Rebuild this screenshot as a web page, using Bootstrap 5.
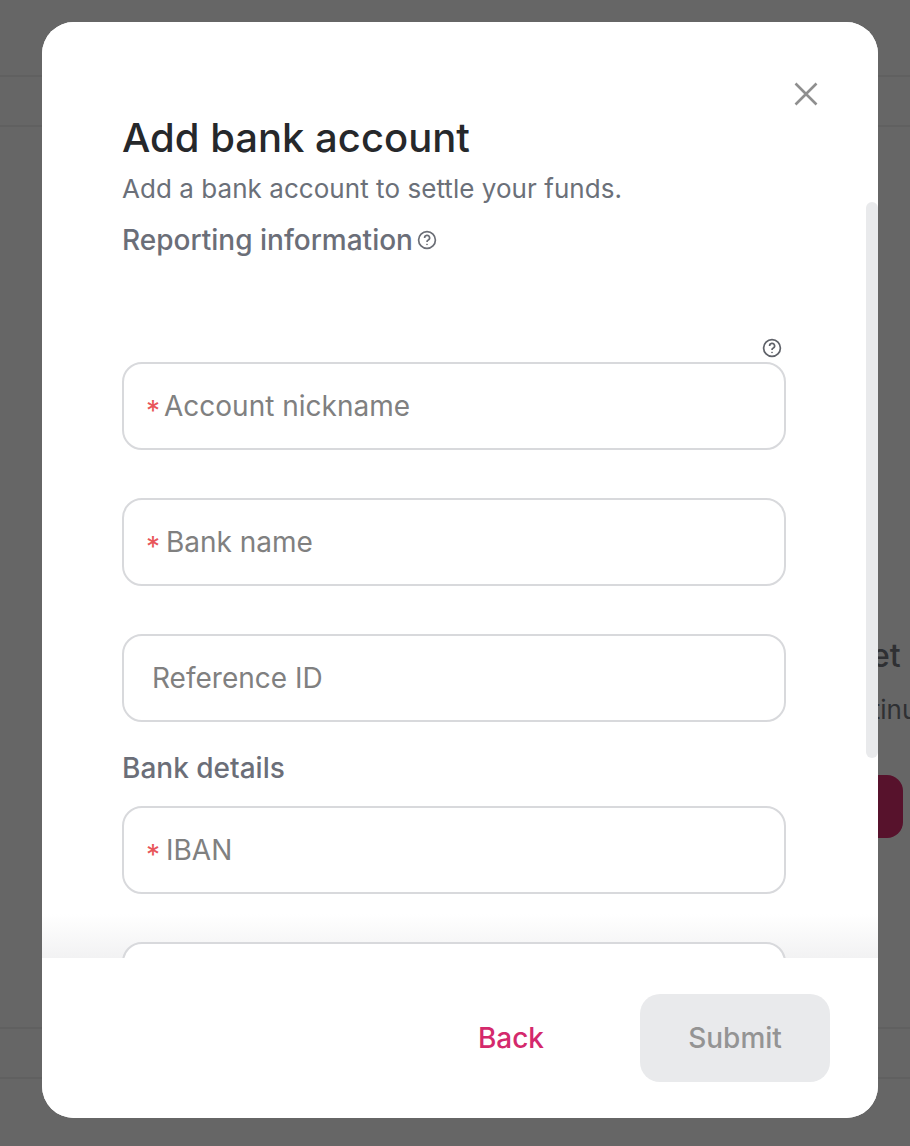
<!doctype html>
<html lang="en">
<head>
<meta charset="utf-8">
<title>Add bank account</title>
<link href="https://cdn.jsdelivr.net/npm/bootstrap@5.3.0/dist/css/bootstrap.min.css" rel="stylesheet">
<style>
html,body{height:100%;overflow:hidden}
body{font-family:Inter,"Liberation Sans",sans-serif;background:#fff;color:#2b2d33}
.bk-page{height:1146px;overflow:hidden}
.bk-strip{height:52px;margin-top:75px;border-top:2px solid #f0f0f0;border-bottom:2px solid #f0f0f0}
.bk-strip-low{margin-top:0}
.bk-main{height:900px;padding-top:509px}
.bk-get{margin:0 0 0 847px;font-size:32px;font-weight:500;line-height:40px;white-space:nowrap;color:#75787f}
.bk-cont{margin:19px 0 0 826px;font-size:26px;line-height:30px;white-space:nowrap;color:#75787f}
.bk-cta{display:block;width:203px;height:63px;margin:50px 0 0 700px;background:#d92d6e;border-radius:16px}
.modal-backdrop.bk-scrim{opacity:.6}
.bk-dialog{width:836px;max-width:836px;margin:22px 0 0 42px;position:relative}
.bk-content{height:1096px;border:0;border-radius:32px;overflow:hidden;background:#fff}
.bk-scroll{height:936px;padding:0 92px 0 80px;overflow:hidden;flex:none;background:linear-gradient(#fff,#f2f2f3) bottom/100% 44px no-repeat #fff}
.bk-title{margin:94px 0 0;font-size:40px;font-weight:500;line-height:44px;color:#26282b}
.bk-sub{margin:13px 0 0;font-size:26px;line-height:32px;color:#6b7079;letter-spacing:.05px}
.bk-secrow{margin-top:17px}
.bk-section{margin:0;font-size:28px;font-weight:500;line-height:36px;color:#6b6e78}
.bk-sec2{margin:28px 0 20px}
.bk-field{position:relative}
.bk-field .form-control{height:88px;border:2px solid #d8d9dc;border-radius:20px;padding:0 28px;font-size:28px;color:#333;background:#fff}
.bk-field .form-control::placeholder{color:#808080;opacity:1}
.bk-field .bk-req{padding-left:42px}
.bk-field .bk-req-tight{padding-left:40px}
.bk-star{position:absolute;left:24px;top:31px;color:#e8555a;font-size:28px;line-height:36px}
.bk-help{flex:none;display:block}
.bk-helprow{padding:80px 4px 4px 0}
.bk-close{position:absolute;top:60px;right:60px;z-index:2;width:24px;height:24px;padding:0;border:0;background:none;line-height:0}
.bk-bar{position:absolute;right:0;top:180px;width:12px;height:556px;background:#e9eaec;border-radius:6px}
.bk-foot{height:160px;flex:none;padding:36px 48px 36px 0;border:0;background:#fff}
.modal-footer .bk-back,.modal-footer .bk-submit{height:88px;font-size:28px;font-weight:500;border:0;border-radius:20px;padding:0;margin:0}
.modal-footer .bk-back{color:#d4296c;background:none;margin-right:96px}
.bk-submit{width:190px}
.btn.bk-submit:disabled{background:#e9eaec;color:#949494;opacity:1}
</style>
</head>
<body>
<div class="bk-page">
  <div class="bk-strip"></div>
  <div class="bk-main">
    <div class="bk-get">Get</div>
    <div class="bk-cont">continue</div>
    <span class="bk-cta"></span>
  </div>
  <div class="bk-strip bk-strip-low"></div>
</div>
<div class="modal-backdrop show bk-scrim"></div>
<div class="modal d-block" tabindex="-1">
  <div class="modal-dialog bk-dialog">
    <div class="modal-content bk-content">
      <button type="button" class="bk-close" aria-label="Close">
        <svg width="24" height="24" viewBox="0 0 24 24" fill="none" stroke="#8f8f8f" stroke-width="2.6"><path d="M1.5 1.5 22.5 22.5M22.5 1.5 1.5 22.5"/></svg>
      </button>
      <div class="modal-body bk-scroll d-block">
        <h1 class="bk-title">Add bank account</h1>
        <p class="bk-sub">Add a bank account to settle your funds.</p>
        <div class="d-flex align-items-center gap-1 bk-secrow">
          <h2 class="bk-section">Reporting information</h2>
          <svg class="bk-help" width="20" height="20" viewBox="0 0 20 20" fill="none" stroke="#6b6e76" stroke-width="1.7"><circle cx="10" cy="10" r="8.4"/><path d="M7.6 7.9a2.5 2.5 0 1 1 3.7 2.2c-.8.4-1.3.9-1.3 1.8"/><circle cx="10" cy="14.4" r=".5" fill="#6b6e76" stroke-width=".7"/></svg>
        </div>
        <div class="d-flex justify-content-end bk-helprow">
          <svg class="bk-help" width="20" height="20" viewBox="0 0 20 20" fill="none" stroke="#5f6269" stroke-width="1.7"><circle cx="10" cy="10" r="8.4"/><path d="M7.6 7.9a2.5 2.5 0 1 1 3.7 2.2c-.8.4-1.3.9-1.3 1.8"/><circle cx="10" cy="14.4" r=".5" fill="#5f6269" stroke-width=".7"/></svg>
        </div>
        <div class="bk-field"><span class="bk-star">*</span><input class="form-control bk-req-tight" type="text" placeholder="Account nickname"></div>
        <div class="bk-field mt-5"><span class="bk-star">*</span><input class="form-control bk-req" type="text" placeholder="Bank name"></div>
        <div class="bk-field mt-5"><input class="form-control" type="text" placeholder="Reference ID"></div>
        <h2 class="bk-section bk-sec2">Bank details</h2>
        <div class="bk-field"><span class="bk-star">*</span><input class="form-control bk-req" type="text" placeholder="IBAN"></div>
        <div class="bk-field mt-5"><input class="form-control" type="text" aria-label="More details"></div>
      </div>
      <div class="bk-bar"></div>
      <div class="modal-footer bk-foot d-flex justify-content-end align-items-center">
        <button type="button" class="btn bk-back">Back</button>
        <button type="button" class="btn bk-submit" disabled>Submit</button>
      </div>
    </div>
  </div>
</div>
<script src="https://cdn.jsdelivr.net/npm/bootstrap@5.3.0/dist/js/bootstrap.bundle.min.js"></script>
</body>
</html>
